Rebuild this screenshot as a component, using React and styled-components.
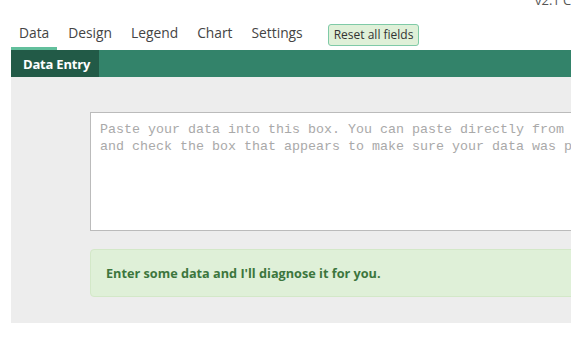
import styled, { createGlobalStyle } from 'styled-components';

const GlobalStyle = createGlobalStyle`
  html, body {
    margin: 0;
    padding: 0;
    overflow: hidden;
    background: #ffffff;
    font-family: "Open Sans", "Liberation Sans", sans-serif;
  }
`;

const Page = styled.div`
  width: 800px;
  padding-left: 11px;
`;

const TopBar = styled.div`
  height: 12px;
  display: flex;
  justify-content: flex-end;
  align-items: flex-end;
  padding-right: 184px;
`;

const Version = styled.span`
  font-size: 13px;
  line-height: 13px;
  color: #555;
  margin-bottom: 5px;
`;

const TabRow = styled.div`
  display: flex;
  align-items: flex-end;
  gap: 3px;
`;

const Tab = styled.div`
  padding: 11px 8px 4px;
  font-size: 13.8px;
  line-height: 20px;
  color: #444;
  border-bottom: 3px solid ${(p) => (p.$active ? '#62bf9c' : 'transparent')};
  cursor: pointer;
`;

const ResetButton = styled.button`
  align-self: center;
  margin: 7px 0 0 14px;
  height: 22px;
  padding: 0 5px;
  font-family: "Open Sans", "Liberation Sans", sans-serif;
  font-size: 12px;
  color: #333;
  background: #dff0d8;
  border: 1px solid #7fcaa7;
  border-radius: 3px;
`;

const SectionBar = styled.div`
  display: flex;
  height: 27px;
  background: #33836a;
`;

const SectionTab = styled.div`
  display: flex;
  align-items: center;
  padding: 0 9px 0 12px;
  background: #225a47;
  color: #fff;
  font-size: 13px;
  font-weight: 700;
  letter-spacing: -0.2px;
`;

const Panel = styled.div`
  background: #ededed;
  padding: 35px 79px 26px;
  display: flex;
  flex-direction: column;
  gap: 18px;
`;

const DataBox = styled.textarea`
  box-sizing: border-box;
  width: 100%;
  height: 119px;
  margin: 0;
  padding: 8px 9px;
  resize: none;
  border: 1px solid #bbb;
  border-radius: 0;
  background: #fff;
  font-family: "Liberation Mono", "Courier New", monospace;
  font-size: 13.33px;
  line-height: 17px;
  color: #333;
  outline: none;

  &::placeholder {
    color: #a9a9a9;
  }
`;

const Diagnosis = styled.div`
  box-sizing: border-box;
  height: 48px;
  display: flex;
  align-items: center;
  padding: 0 15px;
  background: #dff0d8;
  border: 1px solid #d3e8c8;
  border-radius: 4px;
  color: #3c763d;
  font-size: 12.7px;
  font-weight: 700;
`;

const tabs = ['Data', 'Design', 'Legend', 'Chart', 'Settings'];

const placeholder =
  'Paste your data into this box. You can paste directly from Excel\n' +
  'and check the box that appears to make sure your data was parsed correctly.';

export default function App() {
  return (
    <>
      <GlobalStyle />
      <Page>
        <TopBar>
          <Version>v2.1 Changelog</Version>
        </TopBar>
        <TabRow>
          {tabs.map((t) => (
            <Tab key={t} $active={t === 'Data'}>
              {t}
            </Tab>
          ))}
          <ResetButton>Reset all fields</ResetButton>
        </TabRow>
        <SectionBar>
          <SectionTab>Data Entry</SectionTab>
        </SectionBar>
        <Panel>
          <DataBox placeholder={placeholder} />
          <Diagnosis>Enter some data and I'll diagnose it for you.</Diagnosis>
        </Panel>
      </Page>
    </>
  );
}
